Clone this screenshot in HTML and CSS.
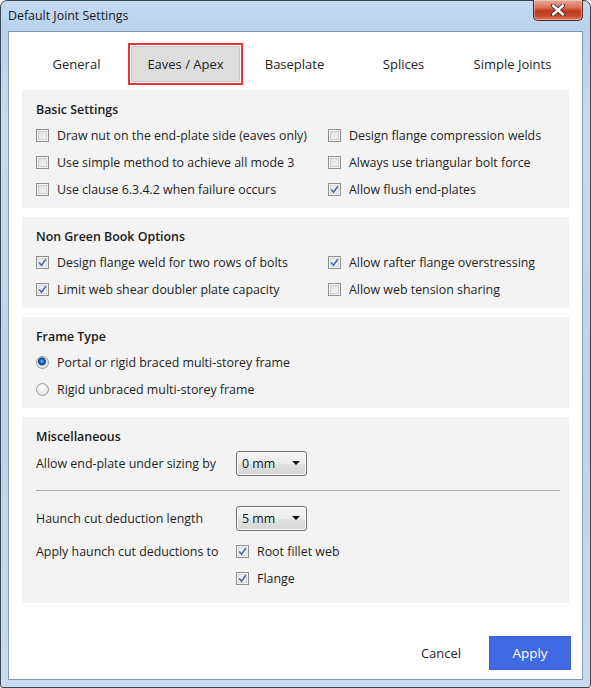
FILE: index.html
```html
<!DOCTYPE html>
<html>
<head>
<meta charset="utf-8">
<link rel="stylesheet" href="styles.css">
</head>
<body>
<div class="window">
  <div class="titlebar">
    <span class="title">Default Joint Settings</span>
    <div class="close">
      <svg width="16" height="12" viewBox="0 0 16 12"><path d="M3 1.5 L13 10.5 M13 1.5 L3 10.5" stroke="#3b2a2a" stroke-width="4.2" stroke-linecap="round"/><path d="M3 1.5 L13 10.5 M13 1.5 L3 10.5" stroke="#ffffff" stroke-width="2.4" stroke-linecap="round"/></svg>
    </div>
  </div>
  <div class="client">
    <nav class="tabs">
      <div class="tab">General</div>
      <div class="tab active">Eaves / Apex</div>
      <div class="tab">Baseplate</div>
      <div class="tab">Splices</div>
      <div class="tab">Simple Joints</div>
    </nav>

    <section class="panel">
      <h2>Basic Settings</h2>
      <div class="grid2">
        <label class="opt"><span class="cb"></span>Draw nut on the end-plate side (eaves only)</label>
        <label class="opt"><span class="cb"></span>Design flange compression welds</label>
        <label class="opt"><span class="cb"></span>Use simple method to achieve all mode 3</label>
        <label class="opt"><span class="cb"></span>Always use triangular bolt force</label>
        <label class="opt"><span class="cb"></span>Use clause 6.3.4.2 when failure occurs</label>
        <label class="opt"><span class="cb checked"><svg width="9" height="9" viewBox="0 0 9 9"><path d="M1.2 4.6 L3.5 7.2 L7.8 1.3" fill="none" stroke="#4a66a8" stroke-width="1.5"/></svg></span>Allow flush end-plates</label>
      </div>
    </section>

    <section class="panel">
      <h2>Non Green Book Options</h2>
      <div class="grid2">
        <label class="opt"><span class="cb checked"><svg width="9" height="9" viewBox="0 0 9 9"><path d="M1.2 4.6 L3.5 7.2 L7.8 1.3" fill="none" stroke="#4a66a8" stroke-width="1.5"/></svg></span>Design flange weld for two rows of bolts</label>
        <label class="opt"><span class="cb checked"><svg width="9" height="9" viewBox="0 0 9 9"><path d="M1.2 4.6 L3.5 7.2 L7.8 1.3" fill="none" stroke="#4a66a8" stroke-width="1.5"/></svg></span>Allow rafter flange overstressing</label>
        <label class="opt"><span class="cb checked"><svg width="9" height="9" viewBox="0 0 9 9"><path d="M1.2 4.6 L3.5 7.2 L7.8 1.3" fill="none" stroke="#4a66a8" stroke-width="1.5"/></svg></span>Limit web shear doubler plate capacity</label>
        <label class="opt"><span class="cb"></span>Allow web tension sharing</label>
      </div>
    </section>

    <section class="panel">
      <h2>Frame Type</h2>
      <label class="opt"><span class="rb checked"></span>Portal or rigid braced multi-storey frame</label>
      <label class="opt"><span class="rb"></span>Rigid unbraced multi-storey frame</label>
    </section>

    <section class="panel misc">
      <h2>Miscellaneous</h2>
      <div class="misc-grid">
        <span class="mlabel">Allow end-plate under sizing by</span>
        <div class="select"><span>0 mm</span><i class="arrow"></i></div>
        <hr class="sep">
        <span class="mlabel">Haunch cut deduction length</span>
        <div class="select"><span>5 mm</span><i class="arrow"></i></div>
        <span class="mlabel apply">Apply haunch cut deductions to</span>
        <label class="opt apply"><span class="cb checked"><svg width="9" height="9" viewBox="0 0 9 9"><path d="M1.2 4.6 L3.5 7.2 L7.8 1.3" fill="none" stroke="#4a66a8" stroke-width="1.5"/></svg></span>Root fillet web</label>
        <span></span>
        <label class="opt"><span class="cb checked"><svg width="9" height="9" viewBox="0 0 9 9"><path d="M1.2 4.6 L3.5 7.2 L7.8 1.3" fill="none" stroke="#4a66a8" stroke-width="1.5"/></svg></span>Flange</label>
      </div>
    </section>

    <div class="actions">
      <button class="btn-cancel">Cancel</button>
      <button class="btn-apply">Apply</button>
    </div>
  </div>
</div>
</body>
</html>
```
FILE: styles.css
```css
* { box-sizing: border-box; }
html, body { margin: 0; padding: 0; background: #ffffff; }
body {
  width: 591px;
  height: 688px;
  overflow: hidden;
  font-family: "Open Sans", "Noto Sans", "DejaVu Sans", sans-serif;
  font-size: 12.4px;
  color: #1e1e1e;
}
.window {
  width: 591px;
  height: 688px;
  border: 1px solid #3a4654;
  border-radius: 7px 7px 3px 3px;
  background: linear-gradient(to bottom, #c3daf1 0px, #b9d2ec 30px, #c6dcf1 120px, #bcd4ec 400px, #c7dcf0 688px);
  padding: 0 7px 7px;
  display: flex;
  flex-direction: column;
}
.titlebar {
  height: 30px;
  display: flex;
  align-items: flex-start;
  flex-shrink: 0;
}
.title {
  padding-top: 7px;
  line-height: 16px;
  font-size: 12.4px;
  color: #1a1a1a;
}
.close {
  margin-left: auto;
  margin-top: -1px;
  margin-right: 0;
  width: 50px;
  height: 21px;
  border: 1px solid #5a2a22;
  border-top: none;
  border-radius: 0 0 5px 5px;
  background: linear-gradient(to bottom, #e8a894 0%, #d9785f 35%, #c0391c 55%, #c84a2c 80%, #dc7d60 100%);
  box-shadow: inset 0 0 0 1px rgba(255,255,255,0.35);
  display: flex;
  align-items: center;
  justify-content: center;
}
.client {
  flex: 1;
  background: #ffffff;
  border: 1px solid #8497ad;
  padding: 11px 13px 9px;
  display: flex;
  flex-direction: column;
}
.tabs {
  display: grid;
  grid-template-columns: repeat(5, 1fr);
  height: 42px;
  margin-right: 2px;
  margin-bottom: 5px;
}
.tab {
  display: flex;
  align-items: center;
  justify-content: center;
  font-size: 13px;
  color: #1e1e1e;
}
.tab.active {
  margin: 0 -3px;
  border: 2px solid #e8323c;
  background: #dddddd;
  box-shadow: inset 0 0 0 1px #ffffff, inset 0 0 0 2px #c9c9c9;
}
.panel {
  background: #f3f3f3;
  padding: 11px 9px 5px 14px;
  margin-bottom: 9px;
}
.panel h2 {
  margin: 0 0 3px;
  font-size: 12.4px;
  font-weight: 600;
  line-height: 18px;
  color: #1a1a1a;
}
.grid2 {
  display: grid;
  grid-template-columns: 292px 1fr;
}
.opt {
  display: flex;
  align-items: center;
  gap: 8px;
  height: 27px;
  white-space: nowrap;
}
.cb {
  width: 13px;
  height: 13px;
  flex-shrink: 0;
  border: 1px solid #8f8f8f;
  background: linear-gradient(135deg, #dcdcdc, #f7f7f7);
  box-shadow: inset 0 0 0 1px #f4f4f4, inset 0 0 0 2px #cfcfcf;
  display: flex;
  align-items: center;
  justify-content: center;
}
.cb.checked {
  background: linear-gradient(135deg, #e2e6ee, #fafbfd);
  box-shadow: inset 0 0 0 1px #f4f4f4, inset 0 0 0 2px #d4d8e0;
}
.rb {
  width: 13px;
  height: 13px;
  flex-shrink: 0;
  border-radius: 50%;
  border: 1px solid #9a9a9a;
  background: radial-gradient(circle at 40% 35%, #ffffff 0%, #e4e4e4 70%, #cfcfcf 100%);
}
.rb.checked {
  background: radial-gradient(circle at 45% 40%, #6fc3f4 0px, #1a6fc0 2px, #0c3f86 3.5px, #e9e9e9 4.5px, #d8d8d8 100%);
}
.misc {
  padding-bottom: 11px;
  margin-bottom: 0;
}
.misc h2 { margin-bottom: 1px; }
.misc-grid {
  display: grid;
  grid-template-columns: 200px 1fr;
  grid-auto-rows: auto;
}
.mlabel {
  display: flex;
  align-items: center;
  height: 32px;
}
.mlabel.apply { height: 27px; margin-top: 4px; }
.opt.apply { margin-top: 4px; }
.select {
  align-self: center;
  width: 71px;
  height: 25px;
  border: 1px solid #6f6f6f;
  border-radius: 3px;
  background: linear-gradient(to bottom, #f4f4f4 0%, #ececec 50%, #e0e0e0 51%, #d6d6d6 100%);
  box-shadow: inset 0 0 0 1px #fbfbfb;
  display: flex;
  align-items: center;
  padding: 0 6px 0 5px;
  color: #111;
}
.select .arrow {
  margin-left: auto;
  width: 0;
  height: 0;
  border-left: 4px solid transparent;
  border-right: 4px solid transparent;
  border-top: 4px solid #111;
}
.sep {
  grid-column: 1 / -1;
  border: none;
  border-top: 1px solid #a7a7a7;
  margin: 11px 0 11px;
  height: 0;
}
.actions {
  margin-top: auto;
  display: flex;
  justify-content: flex-end;
  align-items: center;
  gap: 17px;
}
.btn-cancel {
  width: 62px;
  height: 34px;
  border: none;
  background: transparent;
  font-family: inherit;
  font-size: 13px;
  color: #1e1e1e;
}
.btn-apply {
  width: 82px;
  height: 34px;
  margin-right: -2px;
  border: 1px solid #3a62d8;
  background: #4169e1;
  color: #ffffff;
  font-family: inherit;
  font-size: 13.5px;
}
```
